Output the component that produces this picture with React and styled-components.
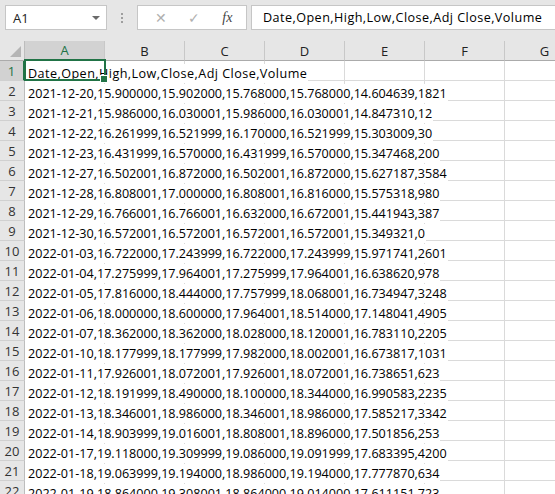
import React from "react"
import styled, { createGlobalStyle } from "styled-components"

const GlobalStyle = createGlobalStyle`
  body {
    margin: 0;
    overflow: hidden;
    font-family: "Open Sans", "Liberation Sans", sans-serif;
  }
  * {
    box-sizing: border-box;
  }
`

const Window = styled.div`
  width: 555px;
  height: 494px;
  overflow: hidden;
  background: #ffffff;
`

const Toolbar = styled.div`
  display: flex;
  align-items: flex-start;
  height: 41px;
  padding: 5px 0 0 5px;
  background: #e6e6e6;
`

const NameBox = styled.div`
  display: flex;
  align-items: center;
  justify-content: space-between;
  width: 102px;
  height: 25px;
  padding: 0 6px 0 7px;
  background: #ffffff;
  border: 1px solid #c6c6c6;
  font-size: 13px;
  color: #222;
`

const Caret = styled.span`
  width: 0;
  height: 0;
  border-left: 4px solid transparent;
  border-right: 4px solid transparent;
  border-top: 4px solid #6a6a6a;
`

const Grip = styled.div`
  display: flex;
  flex-direction: column;
  align-items: center;
  justify-content: center;
  gap: 2px;
  width: 30px;
  height: 25px;

  span {
    width: 2px;
    height: 2px;
    background: #9e9e9e;
  }
`

const ActionBox = styled.div`
  display: flex;
  align-items: center;
  justify-content: space-around;
  width: 110px;
  height: 25px;
  padding: 0 2px 0 6px;
  background: #ffffff;
  border: 1px solid #c6c6c6;
`

const ActionIcon = styled.span`
  display: flex;
  width: 24px;
  justify-content: center;
  color: ${(p) => (p.$dark ? "#444" : "#b0b0b0")};
  font-family: ${(p) => (p.$dark ? '"Liberation Serif", serif' : "inherit")};
  font-style: ${(p) => (p.$dark ? "italic" : "normal")};
  font-size: 14px;
`

const FormulaInput = styled.div`
  flex: 1;
  height: 25px;
  margin-left: 4px;
  padding-left: 11px;
  display: flex;
  align-items: center;
  background: #ffffff;
  border: 1px solid #c6c6c6;
  border-right: none;
  font-size: 12.6px;
  letter-spacing: 0.45px;
  color: #000;
  white-space: nowrap;
`

const Row = styled.div`
  display: flex;
  height: 20px;
`

const Corner = styled.div`
  position: relative;
  flex: 0 0 25px;
  height: 20px;
  background: #e6e6e6;
  border-right: 1px solid #bdbdbd;
  border-bottom: 1px solid #ababab;

  &::after {
    content: "";
    position: absolute;
    right: 3px;
    bottom: 3px;
    border-left: 11px solid transparent;
    border-bottom: 11px solid #b5b5b5;
  }
`

const ColHead = styled.div`
  flex: 0 0 80px;
  height: 20px;
  display: flex;
  align-items: center;
  justify-content: center;
  background: ${(p) => (p.$active ? "#d2d2d2" : "#e6e6e6")};
  color: ${(p) => (p.$active ? "#217346" : "#222")};
  border-right: 1px solid #c8c8c8;
  border-bottom: ${(p) => (p.$active ? "2px solid #217346" : "1px solid #ababab")};
  font-size: 13px;
`

const RowHead = styled.div`
  flex: 0 0 25px;
  height: 20px;
  display: flex;
  align-items: center;
  justify-content: center;
  background: ${(p) => (p.$active ? "#d2d2d2" : "#e6e6e6")};
  color: ${(p) => (p.$active ? "#217346" : "#333")};
  border-right: ${(p) => (p.$active ? "2px solid #217346" : "1px solid #bdbdbd")};
  border-bottom: 1px solid #d0d0d0;
  font-size: 13px;
`

const Cell = styled.div`
  position: relative;
  flex: 0 0 80px;
  min-width: 0;
  height: 20px;
  border-right: 1px solid #dadada;
  border-bottom: 1px solid #dadada;
  white-space: nowrap;
`

const CellText = styled.span`
  position: relative;
  z-index: 1;
  display: inline-block;
  height: 19px;
  line-height: 19px;
  padding: 0 1px 0 3px;
  background: #ffffff;
  font-size: 12.6px;
  letter-spacing: ${(p) => (p.$header ? "0.45px" : "0")};
  color: #000;
`

const Selection = styled.div`
  position: absolute;
  z-index: 2;
  top: -2px;
  left: -1px;
  right: -2px;
  bottom: -1px;
  border: 2px solid #217346;

  &::after {
    content: "";
    position: absolute;
    right: -4px;
    bottom: -4px;
    width: 6px;
    height: 6px;
    background: #217346;
    border: 1px solid #ffffff;
  }
`

const columns = ["A", "B", "C", "D", "E", "F", "G"]

const lines = [
  "Date,Open,High,Low,Close,Adj Close,Volume",
  "2021-12-20,15.900000,15.902000,15.768000,15.768000,14.604639,1821",
  "2021-12-21,15.986000,16.030001,15.986000,16.030001,14.847310,12",
  "2021-12-22,16.261999,16.521999,16.170000,16.521999,15.303009,30",
  "2021-12-23,16.431999,16.570000,16.431999,16.570000,15.347468,200",
  "2021-12-27,16.502001,16.872000,16.502001,16.872000,15.627187,3584",
  "2021-12-28,16.808001,17.000000,16.808001,16.816000,15.575318,980",
  "2021-12-29,16.766001,16.766001,16.632000,16.672001,15.441943,387",
  "2021-12-30,16.572001,16.572001,16.572001,16.572001,15.349321,0",
  "2022-01-03,16.722000,17.243999,16.722000,17.243999,15.971741,2601",
  "2022-01-04,17.275999,17.964001,17.275999,17.964001,16.638620,978",
  "2022-01-05,17.816000,18.444000,17.757999,18.068001,16.734947,3248",
  "2022-01-06,18.000000,18.600000,17.964001,18.514000,17.148041,4905",
  "2022-01-07,18.362000,18.362000,18.028000,18.120001,16.783110,2205",
  "2022-01-10,18.177999,18.177999,17.982000,18.002001,16.673817,1031",
  "2022-01-11,17.926001,18.072001,17.926001,18.072001,16.738651,623",
  "2022-01-12,18.191999,18.490000,18.100000,18.344000,16.990583,2235",
  "2022-01-13,18.346001,18.986000,18.346001,18.986000,17.585217,3342",
  "2022-01-14,18.903999,19.016001,18.808001,18.896000,17.501856,253",
  "2022-01-17,19.118000,19.309999,19.086000,19.091999,17.683395,4200",
  "2022-01-18,19.063999,19.194000,18.986000,19.194000,17.777870,634",
  "2022-01-19,18.864000,19.308001,18.864000,19.014000,17.611151,723",
]

const App = () => (
  <Window>
    <GlobalStyle />
    <Toolbar>
      <NameBox>
        A1
        <Caret />
      </NameBox>
      <Grip>
        <span />
        <span />
        <span />
      </Grip>
      <ActionBox>
        <ActionIcon>✕</ActionIcon>
        <ActionIcon>✓</ActionIcon>
        <ActionIcon $dark>fx</ActionIcon>
      </ActionBox>
      <FormulaInput>{lines[0]}</FormulaInput>
    </Toolbar>

    <Row>
      <Corner />
      {columns.map((c) => (
        <ColHead key={c} $active={c === "A"}>
          {c}
        </ColHead>
      ))}
    </Row>

    {lines.map((text, i) => (
      <Row key={i}>
        <RowHead $active={i === 0}>{i + 1}</RowHead>
        {columns.map((c) => (
          <Cell key={c}>
            {c === "A" && <CellText $header={i === 0}>{text}</CellText>}
            {c === "A" && i === 0 && <Selection />}
          </Cell>
        ))}
      </Row>
    ))}
  </Window>
)

export default App
